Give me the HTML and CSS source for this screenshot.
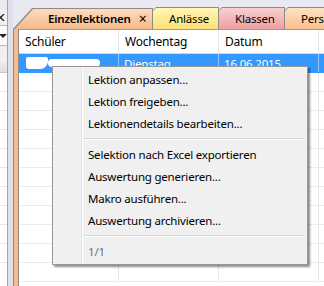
FILE: index.html
```html
<!DOCTYPE html>
<html lang="de">
<head>
    <meta charset="UTF-8">
    <title>Einzellektionen</title>
    <link rel="stylesheet" href="styles.css">
</head>
<body>
    <div class="side">
        <div class="side-top"></div>
        <div class="side-close">
            <svg width="7" height="7" viewBox="0 0 7 7"><path d="M-3 0 L4 7 M4 0 L-3 7" stroke="#222" stroke-width="1.3"/></svg>
        </div>
        <div class="side-combo"><span class="arrow"></span></div>
        <div class="side-gap"></div>
        <div class="side-head"></div>
        <div class="side-row"></div>
        <div class="side-row"></div>
        <div class="side-row"></div>
        <div class="side-row"></div>
        <div class="side-row"></div>
        <div class="side-row"></div>
        <div class="side-row"></div>
        <div class="side-row"></div>
        <div class="side-row"></div>
        <div class="side-row"></div>
    </div>
    <div class="splitter"></div>

    <div class="docs">
        <div class="tabs">
            <div class="tab tab-active">
                <div class="tab-face">
                    <span class="tab-label">Einzellektionen</span>
                    <span class="tab-close">×</span>
                </div>
            </div>
            <div class="tab tab-yellow"><div class="tab-face"><span class="tab-label">Anlässe</span></div></div>
            <div class="tab tab-pink"><div class="tab-face"><span class="tab-label">Klassen</span></div></div>
            <div class="tab tab-peach"><div class="tab-face"><span class="tab-label">Perso</span></div></div>
        </div>

        <div class="frame">
            <div class="grid">
                <div class="row head">
                    <div class="cell">Schüler</div>
                    <div class="cell">Wochentag</div>
                    <div class="cell">Datum</div>
                    <div class="cell"></div>
                </div>
                <div class="row selected">
                    <div class="cell"><span class="smudge"></span><span class="smudge smudge-2"></span></div>
                    <div class="cell">Dienstag</div>
                    <div class="cell">16.06.2015</div>
                    <div class="cell"></div>
                </div>
                <div class="row"><div class="cell"></div><div class="cell"></div><div class="cell"></div><div class="cell"></div></div>
                <div class="row"><div class="cell"></div><div class="cell"></div><div class="cell"></div><div class="cell"></div></div>
                <div class="row"><div class="cell"></div><div class="cell"></div><div class="cell"></div><div class="cell"></div></div>
                <div class="row"><div class="cell"></div><div class="cell"></div><div class="cell"></div><div class="cell"></div></div>
                <div class="row"><div class="cell"></div><div class="cell"></div><div class="cell"></div><div class="cell"></div></div>
                <div class="row"><div class="cell"></div><div class="cell"></div><div class="cell"></div><div class="cell"></div></div>
                <div class="row"><div class="cell"></div><div class="cell"></div><div class="cell"></div><div class="cell"></div></div>
                <div class="row"><div class="cell"></div><div class="cell"></div><div class="cell"></div><div class="cell"></div></div>
                <div class="row"><div class="cell"></div><div class="cell"></div><div class="cell"></div><div class="cell"></div></div>
                <div class="row"><div class="cell"></div><div class="cell"></div><div class="cell"></div><div class="cell"></div></div>
                <div class="row"><div class="cell"></div><div class="cell"></div><div class="cell"></div><div class="cell"></div></div>
            </div>
        </div>
    </div>

    <div class="menu">
        <div class="menu-item">Lektion anpassen...</div>
        <div class="menu-item">Lektion freigeben...</div>
        <div class="menu-item">Lektionendetails bearbeiten...</div>
        <div class="menu-sep"></div>
        <div class="menu-item">Selektion nach Excel exportieren</div>
        <div class="menu-item">Auswertung generieren...</div>
        <div class="menu-item">Makro ausführen...</div>
        <div class="menu-item">Auswertung archivieren...</div>
        <div class="menu-sep"></div>
        <div class="menu-item disabled">1/1</div>
    </div>
</body>
</html>
```

FILE: styles.css
```css
body {
    margin: 0;
    width: 324px;
    height: 286px;
    overflow: hidden;
    display: flex;
    background-color: #e9e9f1;
    font-family: 'Noto Sans', 'Open Sans', sans-serif;
    font-size: 11.5px;
    letter-spacing: -0.2px;
    color: #000;
}

/* left tool window, mostly cut off */
.side {
    width: 7px;
    background: #fff;
    border-right: 1px solid #a5a5a5;
    overflow: hidden;
    display: flex;
    flex-direction: column;
}

.side-top {
    height: 9px;
    background: #e9e9f1;
}

.side-close {
    height: 16px;
    background: #f0f0f0;
    display: flex;
    align-items: center;
}

.side-close svg {
    display: block;
}

.side-combo {
    height: 19px;
    background: #fbfbfb;
    border-top: 1px solid #b9b9b9;
    border-bottom: 1px solid #b9b9b9;
    display: flex;
    align-items: center;
    justify-content: flex-end;
}

.arrow {
    width: 0;
    height: 0;
    border-left: 4px solid transparent;
    border-right: 4px solid transparent;
    border-top: 4px solid #222;
}

.side-gap {
    height: 13px;
    background: #f0f0f0;
}

.side-head {
    height: 13px;
    background: linear-gradient(#f4f4f4, #dcdcdc);
    border-bottom: 1px solid #c8c8c8;
}

.side-row {
    height: 18px;
    border-bottom: 1px solid #e6e6e6;
    flex-shrink: 0;
}

.splitter {
    width: 5px;
    background: #dedfea;
}

/* document tabs */
.docs {
    flex: 1;
    display: flex;
    flex-direction: column;
    min-width: 0;
}

.tabs {
    height: 29px;
    display: flex;
    align-items: flex-end;
    flex-shrink: 0;
    overflow: hidden;
}

.tab {
    height: 21px;
    background: #8c8c8c;
    padding: 1px 1px 0 1px;
    clip-path: polygon(0 4px, 4px 0, 100% 0, 100% 100%, 0 100%);
    margin-right: -1px;
    flex-shrink: 0;
}

.tab-face {
    height: 100%;
    display: flex;
    align-items: center;
    clip-path: polygon(0 3px, 3px 0, 100% 0, 100% 100%, 0 100%);
    box-sizing: border-box;
}

.tab-label {
    white-space: nowrap;
}

.tab-active {
    width: 139px;
    height: 20px;
    padding: 1px 1px 0 0;
    clip-path: polygon(0 100%, 19px 0, 100% 0, 100% 100%);
    background: #8c8c8c;
}

.tab-active .tab-face {
    clip-path: polygon(1px 100%, 20px 0, 100% 0, 100% 100%);
    background: linear-gradient(#fcdcbd, #f6b886);
    padding-left: 35px;
    padding-bottom: 2px;
    height: 21px;
}

.tab-active .tab-label {
    font-weight: 600;
}

.tab-close {
    margin-left: 8px;
    font-size: 14px;
    font-weight: 400;
    line-height: 1;
}

.tab-yellow {
    width: 65px;
}

.tab-yellow .tab-face {
    background: linear-gradient(#fff7b4, #fde176);
    padding-left: 16px;
}

.tab-pink {
    width: 65px;
}

.tab-pink .tab-face {
    background: linear-gradient(#f9cfcf, #ef9fa1);
    padding-left: 16px;
}

.tab-peach {
    width: 60px;
}

.tab-peach .tab-face {
    background: linear-gradient(#fde2c4, #f9c08c);
    padding-left: 16px;
}

/* orange frame of the active document */
.frame {
    flex: 1;
    border-left: 1px solid #8c8c8c;
    background: #f6bb8a;
    padding-left: 4px;
    display: flex;
    min-height: 0;
}

.grid {
    flex: 1;
    background: #fff;
    border-left: 1px solid #8c8c8c;
    border-top: 1px solid #9a9a9a;
    overflow: hidden;
}

.row {
    display: grid;
    grid-template-columns: 100px 100px 100px 100px;
    height: 18px;
    border-bottom: 1px solid #ececec;
}

.cell {
    border-right: 1px solid #e6e6e6;
    padding-left: 5px;
    display: flex;
    align-items: center;
    white-space: nowrap;
    overflow: hidden;
}

.row.head {
    height: 23px;
    border-bottom: 1px solid #d5d5d5;
}

.row.head .cell {
    padding-left: 6px;
    font-size: 12px;
}

.row.selected {
    background: #3399ff;
    color: #fff;
    border-bottom-color: #3399ff;
}

.row.selected .cell {
    border-right-color: #8fc4ff;
}

.smudge {
    display: inline-block;
    width: 22px;
    height: 12px;
    background: #fff;
    border-radius: 2px 2px 8px 3px;
    margin-left: 2px;
}

.smudge-2 {
    width: 52px;
    height: 8px;
    margin-left: 0;
    border-radius: 4px;
}

/* context menu */
.menu {
    position: absolute;
    left: 52px;
    top: 66px;
    width: 254px;
    height: 195px;
    background:
        linear-gradient(90deg, transparent 28px, #e2e3e3 28px, #e2e3e3 29px, #fff 29px, #fff 30px, transparent 30px),
        #f0f0f0;
    border: 1px solid #979797;
    box-shadow: 2px 2px 2px rgba(0, 0, 0, 0.45);
    padding-top: 2px;
}

.menu-item {
    height: 22px;
    line-height: 22px;
    padding-left: 35px;
    white-space: nowrap;
}

.menu-item.disabled {
    color: #6d6d6d;
}

.menu-sep {
    height: 1px;
    margin: 3px 2px 4px 30px;
    background: #d7d7d7;
    border-bottom: 1px solid #fff;
}
```
